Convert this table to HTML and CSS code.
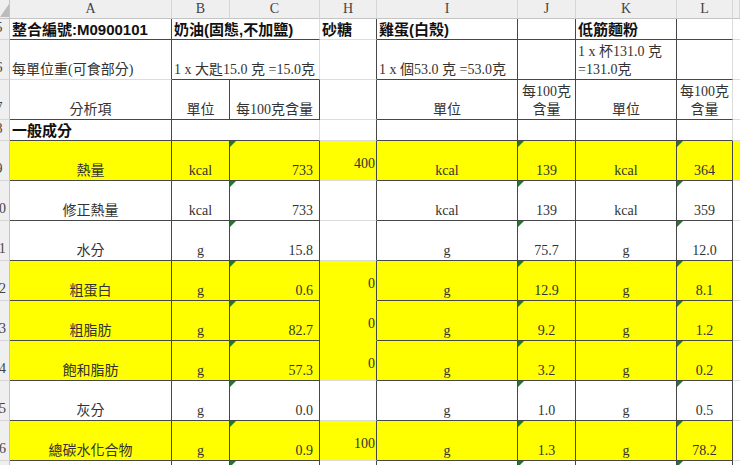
FILE: index.html
```html
<!DOCTYPE html>
<html lang="zh-Hant">
<head>
<meta charset="utf-8">
<title>營養成分</title>
<link rel="stylesheet" href="styles.css">
</head>
<body>
<div class="sheet">
  <!-- column headers -->
  <div class="corner"><svg width="10" height="19" viewBox="0 0 10 19"><polygon points="9,4 9,17 0,17" fill="#bcbcbc"/></svg></div>
  <div class="ch">A</div><div class="ch">B</div><div class="ch">C</div><div class="ch">H</div>
  <div class="ch">I</div><div class="ch">J</div><div class="ch">K</div><div class="ch">L</div><div class="ch"></div>

  <!-- row 5 -->
  <div class="c rh"><span>5</span></div>
  <div class="c h dr db"><span>整合編號:M0900101</span></div>
  <div class="c h db span2"><span>奶油(固態,不加鹽)</span></div>
  <div class="c h dr"><span>砂糖</span></div>
  <div class="c h dr db"><span>雞蛋(白殼)</span></div>
  <div class="c dr db"></div>
  <div class="c h dr db"><span>低筋麵粉</span></div>
  <div class="c db"></div>
  <div class="c m"></div>

  <!-- row 6 -->
  <div class="c rh"><span>6</span></div>
  <div class="c dr"><span>每單位重(可食部分)</span></div>
  <div class="c db span2"><span>1 x 大匙15.0 克 =15.0克</span></div>
  <div class="c dr"></div>
  <div class="c dr db"><span>1 x 個53.0 克 =53.0克</span></div>
  <div class="c dr db"></div>
  <div class="c dr db"><span>1 x 杯131.0 克<br>=131.0克</span></div>
  <div class="c db"></div>
  <div class="c m"></div>

  <!-- row 7 -->
  <div class="c rh"><span>7</span></div>
  <div class="c ctr dr db"><span>分析項</span></div>
  <div class="c ctr dr db"><span>單位</span></div>
  <div class="c ctr dr db"><span>每100克含量</span></div>
  <div class="c dr"></div>
  <div class="c ctr dr db"><span>單位</span></div>
  <div class="c ctr dr db"><span>每100克<br>含量</span></div>
  <div class="c ctr dr db"><span>單位</span></div>
  <div class="c ctr db"><span>每100克<br>含量</span></div>
  <div class="c m"></div>

  <!-- row 8 -->
  <div class="c rh"><span>8</span></div>
  <div class="c h dr db"><span>一般成分</span></div>
  <div class="c db span2"></div>
  <div class="c dr"></div>
  <div class="c dr db"></div>
  <div class="c dr db"></div>
  <div class="c dr db"></div>
  <div class="c db"></div>
  <div class="c m"></div>

  <!-- row 9 -->
  <div class="c rh"><span>9</span></div>
  <div class="c ctr dr db y"><span>熱量</span></div>
  <div class="c ctr dr db y"><span>kcal</span></div>
  <div class="c rt dr db y tri"><span>733</span></div>
  <div class="c hv dr y"><span>400</span></div>
  <div class="c ctr dr db y"><span>kcal</span></div>
  <div class="c ctr dr db y tri"><span>139</span></div>
  <div class="c ctr dr db y"><span>kcal</span></div>
  <div class="c ctr dr db y tri"><span>364</span></div>
  <div class="c m y"></div>

  <!-- row 10 -->
  <div class="c rh"><span>10</span></div>
  <div class="c ctr dr db"><span>修正熱量</span></div>
  <div class="c ctr dr db"><span>kcal</span></div>
  <div class="c rt dr db tri"><span>733</span></div>
  <div class="c hv dr"></div>
  <div class="c ctr dr db"><span>kcal</span></div>
  <div class="c ctr dr db tri"><span>139</span></div>
  <div class="c ctr dr db"><span>kcal</span></div>
  <div class="c ctr dr db tri"><span>359</span></div>
  <div class="c m"></div>

  <!-- row 11 -->
  <div class="c rh"><span>11</span></div>
  <div class="c ctr dr db"><span>水分</span></div>
  <div class="c ctr dr db"><span>g</span></div>
  <div class="c rt dr db tri"><span>15.8</span></div>
  <div class="c hv dr"></div>
  <div class="c ctr dr db"><span>g</span></div>
  <div class="c ctr dr db tri"><span>75.7</span></div>
  <div class="c ctr dr db"><span>g</span></div>
  <div class="c ctr dr db tri"><span>12.0</span></div>
  <div class="c m"></div>

  <!-- row 12 -->
  <div class="c rh"><span>12</span></div>
  <div class="c ctr dr db y"><span>粗蛋白</span></div>
  <div class="c ctr dr db y"><span>g</span></div>
  <div class="c rt dr db y tri"><span>0.6</span></div>
  <div class="c hv dr y yb"><span>0</span></div>
  <div class="c ctr dr db y"><span>g</span></div>
  <div class="c ctr dr db y tri"><span>12.9</span></div>
  <div class="c ctr dr db y"><span>g</span></div>
  <div class="c ctr dr db y tri"><span>8.1</span></div>
  <div class="c m"></div>

  <!-- row 13 -->
  <div class="c rh"><span>13</span></div>
  <div class="c ctr dr db y"><span>粗脂肪</span></div>
  <div class="c ctr dr db y"><span>g</span></div>
  <div class="c rt dr db y tri"><span>82.7</span></div>
  <div class="c hv dr y yb"><span>0</span></div>
  <div class="c ctr dr db y"><span>g</span></div>
  <div class="c ctr dr db y tri"><span>9.2</span></div>
  <div class="c ctr dr db y"><span>g</span></div>
  <div class="c ctr dr db y tri"><span>1.2</span></div>
  <div class="c m"></div>

  <!-- row 14 -->
  <div class="c rh"><span>14</span></div>
  <div class="c ctr dr db y"><span>飽和脂肪</span></div>
  <div class="c ctr dr db y"><span>g</span></div>
  <div class="c rt dr db y tri"><span>57.3</span></div>
  <div class="c hv dr y"><span>0</span></div>
  <div class="c ctr dr db y"><span>g</span></div>
  <div class="c ctr dr db y tri"><span>3.2</span></div>
  <div class="c ctr dr db y"><span>g</span></div>
  <div class="c ctr dr db y tri"><span>0.2</span></div>
  <div class="c m"></div>

  <!-- row 15 -->
  <div class="c rh"><span>15</span></div>
  <div class="c ctr dr db"><span>灰分</span></div>
  <div class="c ctr dr db"><span>g</span></div>
  <div class="c rt dr db tri"><span>0.0</span></div>
  <div class="c hv dr"></div>
  <div class="c ctr dr db"><span>g</span></div>
  <div class="c ctr dr db tri"><span>1.0</span></div>
  <div class="c ctr dr db"><span>g</span></div>
  <div class="c ctr dr db tri"><span>0.5</span></div>
  <div class="c m"></div>

  <!-- row 16 -->
  <div class="c rh"><span>16</span></div>
  <div class="c ctr dr db y"><span>總碳水化合物</span></div>
  <div class="c ctr dr db y"><span>g</span></div>
  <div class="c rt dr db y tri"><span>0.9</span></div>
  <div class="c hv dr y"><span>100</span></div>
  <div class="c ctr dr db y"><span>g</span></div>
  <div class="c ctr dr db y tri"><span>1.3</span></div>
  <div class="c ctr dr db y"><span>g</span></div>
  <div class="c ctr dr db y tri"><span>78.2</span></div>
  <div class="c m"></div>

  <!-- row 17 -->
  <div class="c rh"><span>17</span></div>
  <div class="c dr db"></div>
  <div class="c dr db"></div>
  <div class="c dr db tri"></div>
  <div class="c dr"></div>
  <div class="c dr db"></div>
  <div class="c dr db tri"></div>
  <div class="c dr db"></div>
  <div class="c dr db tri"></div>
  <div class="c m"></div>
</div>
</body>
</html>
```

FILE: styles.css
```css
* {
  box-sizing: border-box;
  margin: 0;
  padding: 0;
}

html,
body {
  width: 740px;
  height: 465px;
  overflow: hidden;
  background: #ffffff;
}

.sheet {
  display: grid;
  grid-template-columns: 10px 162px 58px 90px 57px 141px 58px 101px 56px 7px;
  grid-template-rows: 19px 21px 40px 40px 21px repeat(9, 40px);
  font-family: "Liberation Serif", "Noto Sans CJK TC", serif;
  font-size: 14px;
  line-height: 18px;
  color: #333333;
}

.corner {
  background: #efefef;
  border-right: 1px solid #c4c4c4;
  border-bottom: 1px solid #c4c4c4;
  overflow: hidden;
}

.corner svg {
  display: block;
}

.ch {
  display: flex;
  align-items: center;
  justify-content: center;
  background: #efefef;
  border-right: 1px solid #d6d6d6;
  border-bottom: 1px solid #c4c4c4;
  color: #444444;
  font-size: 14px;
  line-height: 18px;
}

.c {
  display: flex;
  align-items: flex-end;
  padding: 0 2px;
  border-right: 1px solid #dcdcdc;
  border-bottom: 1px solid #dcdcdc;
  white-space: nowrap;
  overflow: hidden;
  position: relative;
}

.span2 {
  grid-column: span 2;
}

.rh {
  background: #efefef;
  border-right: 1px solid #c4c4c4;
  border-bottom: 1px solid #d6d6d6;
  padding: 0 0 2px 0;
  color: #444444;
}

.rh span {
  flex: none;
  width: 24px;
  margin-left: -13px;
  text-align: center;
}

.m {
  border-right: none;
}

.dr {
  border-right-color: #474747;
}

.db {
  border-bottom-color: #474747;
}

.y {
  background: #ffff00;
}

.yb {
  border-bottom-color: #ffff00;
}

.ctr {
  justify-content: center;
  text-align: center;
}

.rt {
  justify-content: flex-end;
  padding-right: 6px;
}

.hv {
  justify-content: flex-end;
  align-items: center;
  padding-right: 1px;
  padding-top: 6px;
}

.h {
  font-family: "Liberation Sans", "Noto Sans CJK TC", sans-serif;
  font-weight: bold;
  font-size: 15px;
  color: #111111;
}

.tri::before {
  content: "";
  position: absolute;
  left: 0;
  top: 0;
  width: 0;
  height: 0;
  border-top: 6px solid #1f7a2a;
  border-right: 6px solid transparent;
}
```
